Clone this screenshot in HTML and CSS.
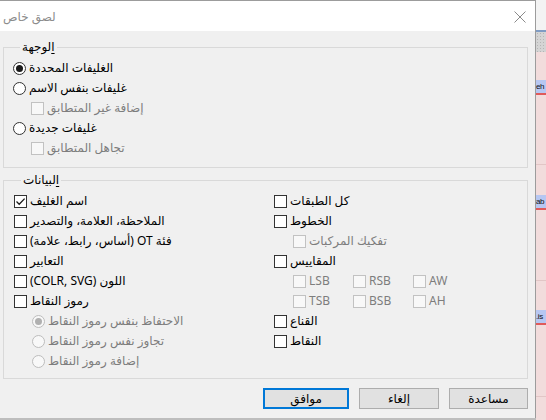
FILE: index.html
```html
<!DOCTYPE html>
<html lang="ar">
<head>
<meta charset="utf-8">
<link rel="stylesheet" href="styles.css">
</head>
<body>
<div class="screen">
  <div class="dialog">
    <div class="titlebar">
      <span class="title">لصق خاص</span>
      <svg class="close" width="12" height="12" viewBox="0 0 12 12"><path d="M0.5 0.5 L11.5 11.5 M11.5 0.5 L0.5 11.5" stroke="#8a8a8a" stroke-width="1" fill="none"/></svg>
    </div>
    <div class="content">
      <fieldset class="group g1">
        <legend><span dir="rtl"><span class="ul">ا</span>لوجهة</span></legend>
        <div class="row"><span class="radio on"></span><span class="lbl" dir="rtl">الغليفات المحددة</span></div>
        <div class="row"><span class="radio"></span><span class="lbl" dir="rtl">غليفات بنفس الاسم</span></div>
        <div class="row sub dis"><span class="check"></span><span class="lbl" dir="rtl">إضافة غير المتطابق</span></div>
        <div class="row"><span class="radio"></span><span class="lbl" dir="rtl">غليفات جديدة</span></div>
        <div class="row sub dis"><span class="check"></span><span class="lbl" dir="rtl">تجاهل المتطابق</span></div>
      </fieldset>
      <fieldset class="group g2">
        <legend><span dir="rtl"><span class="ul">ا</span>لبيانات</span></legend>
        <div class="cols">
          <div class="col">
            <div class="row"><span class="check on"><svg width="11" height="11" viewBox="0 0 11 11"><path d="M1.5 5.5 L4.2 8.2 L9.6 2.6" stroke="#1a1a1a" stroke-width="1.3" fill="none"/></svg></span><span class="lbl" dir="rtl">اسم الغليف</span></div>
            <div class="row"><span class="check"></span><span class="lbl" dir="rtl">الملاحظة، العلامة، والتصدير</span></div>
            <div class="row"><span class="check"></span><span class="lbl" dir="rtl">فئة OT (أساس، رابط، علامة)</span></div>
            <div class="row"><span class="check"></span><span class="lbl" dir="rtl">التعابير</span></div>
            <div class="row"><span class="check"></span><span class="lbl" dir="rtl">اللون (COLR, SVG)</span></div>
            <div class="row"><span class="check"></span><span class="lbl" dir="rtl">رموز النقاط</span></div>
            <div class="row sub dis"><span class="radio on"></span><span class="lbl" dir="rtl">الاحتفاظ بنفس رموز النقاط</span></div>
            <div class="row sub dis"><span class="radio"></span><span class="lbl" dir="rtl">تجاوز نفس رموز النقاط</span></div>
            <div class="row sub dis"><span class="radio"></span><span class="lbl" dir="rtl">إضافة رموز النقاط</span></div>
          </div>
          <div class="col right">
            <div class="row"><span class="check"></span><span class="lbl" dir="rtl">كل الطبقات</span></div>
            <div class="row"><span class="check"></span><span class="lbl" dir="rtl">الخطوط</span></div>
            <div class="row sub dis"><span class="check"></span><span class="lbl" dir="rtl">تفكيك المركبات</span></div>
            <div class="row"><span class="check"></span><span class="lbl" dir="rtl">المقاييس</span></div>
            <div class="row sub dis metrics">
              <span class="cell"><span class="check"></span><span class="lbl">LSB</span></span>
              <span class="cell"><span class="check"></span><span class="lbl">RSB</span></span>
              <span class="cell"><span class="check"></span><span class="lbl">AW</span></span>
            </div>
            <div class="row sub dis metrics">
              <span class="cell"><span class="check"></span><span class="lbl">TSB</span></span>
              <span class="cell"><span class="check"></span><span class="lbl">BSB</span></span>
              <span class="cell"><span class="check"></span><span class="lbl">AH</span></span>
            </div>
            <div class="row"><span class="check"></span><span class="lbl" dir="rtl">القناع</span></div>
            <div class="row"><span class="check"></span><span class="lbl" dir="rtl">النقاط</span></div>
          </div>
        </div>
      </fieldset>
      <div class="buttons">
        <button class="btn default">موافق</button>
        <button class="btn cancel">إلغاء</button>
        <button class="btn help">مساعدة</button>
      </div>
    </div>
  </div>
  <div class="strip">
    <div class="strip-top"></div>
    <div class="strip-line"></div>
    <div class="strip-dots"></div>
    <div class="strip-pink">
      <div class="zone z1"><span class="tag">eh</span></div>
      <div class="zone z2"><span class="tag">ab</span></div>
      <div class="zone z3"><span class="tag">.is</span></div>
    </div>
  </div>
</div>
</body>
</html>
```

FILE: styles.css
```css
html, body {
  margin: 0;
  padding: 0;
}
body {
  width: 546px;
  height: 420px;
  overflow: hidden;
  font-family: "Noto Sans", "DejaVu Sans", sans-serif;
  font-size: 12px;
  color: #000;
  background: #bdbdbd;
}
.screen {
  display: flex;
  height: 420px;
}
.dialog {
  width: 535px;
  height: 417px;
  flex: none;
  border-top: 1px solid #9c9c9c;
  border-right: 1px solid #9c9c9c;
  background: #f0f0f0;
  display: flex;
  flex-direction: column;
}
.titlebar {
  height: 30px;
  flex: none;
  background: #fff;
  display: flex;
  align-items: center;
  justify-content: space-between;
  padding: 0 9px 0 3px;
}
.title {
  color: #8c8c8c;
  font-size: 12px;
}
.close {
  display: block;
  margin-top: 1px;
}
.content {
  padding: 0 7px 0 3px;
  display: flex;
  flex-direction: column;
}
.group {
  margin: 0;
  border: 1px solid #d9d9d9;
  padding: 4px 0 0 9px;
  min-width: 0;
}
.group legend {
  margin-left: 7px;
  padding: 0 2px;
  line-height: 14px;
  height: 14px;
}
.ul {
  text-decoration: underline;
  text-underline-offset: 2px;
}
.g1 {
  margin-top: 9px;
  padding-bottom: 9px;
}
.g2 {
  margin-top: 5px;
  padding-left: 10px;
  padding-bottom: 7px;
}
.row {
  height: 20px;
  display: flex;
  align-items: center;
  white-space: nowrap;
}
.row.sub {
  padding-left: 18px;
}
.col.right .row.sub {
  padding-left: 19px;
}
.lbl {
  margin-left: 3px;
  line-height: 14px;
}
.dis .lbl {
  color: #7d7d7d;
}
.check {
  width: 11px;
  height: 11px;
  border: 1px solid #333;
  background: #fff;
  flex: none;
  display: flex;
  align-items: center;
  justify-content: center;
}
.dis .check {
  border-color: #c2c2c2;
  background: #f8f8f8;
}
.radio {
  width: 11px;
  height: 11px;
  border: 1px solid #333;
  border-radius: 50%;
  background: #fff;
  flex: none;
  display: flex;
  align-items: center;
  justify-content: center;
}
.radio.on::after {
  content: "";
  width: 7px;
  height: 7px;
  border-radius: 50%;
  background: #1a1a1a;
}
.dis .radio {
  border-color: #bdbdbd;
  background: #f8f8f8;
}
.dis .radio.on::after {
  background: #b0b0b0;
}
.cols {
  display: grid;
  grid-template-columns: 260px 1fr;
}
.metrics .cell {
  width: 60px;
  display: flex;
  align-items: center;
}
.buttons {
  margin-top: 9px;
  display: flex;
  justify-content: flex-end;
  gap: 10px;
}
.btn {
  height: 21px;
  width: 80px;
  padding: 0;
  margin: 0;
  border: 1px solid #adadad;
  background: #e1e1e1;
  font-family: "Noto Sans", "DejaVu Sans", sans-serif;
  font-size: 12px;
  line-height: 17px;
  color: #000;
}
.btn.default {
  width: 86px;
  border: 2px solid #0078d7;
}
.btn.help {
  width: 79px;
}
.strip {
  width: 10px;
  flex: none;
  display: flex;
  flex-direction: column;
  overflow: hidden;
}
.strip-top {
  height: 30px;
  background: #f3f3f3;
}
.strip-line {
  height: 2px;
  background: #7f9cc4;
}
.strip-dots {
  height: 20px;
  background-color: #d4d4d4;
  background-image: radial-gradient(circle, #b5b5b5 0.6px, transparent 0.8px);
  background-size: 3px 3px;
}
.strip-pink {
  flex: 1;
  background: #f2dcdc;
  display: flex;
  flex-direction: column;
}
.zone {
  height: 115px;
  border-bottom: 1px solid #e2c6c6;
  position: relative;
}
.z1 { height: 112px; }
.tag {
  position: absolute;
  left: 0;
  width: 10px;
  box-sizing: border-box;
  font-family: "Liberation Sans Narrow", "Liberation Sans", sans-serif;
  font-size: 8px;
  letter-spacing: -0.4px;
  line-height: 13px;
  background: #b7c7f2;
  border-bottom: 2px solid #e05a5a;
  color: #111;
  padding: 0;
  white-space: nowrap;
  overflow: hidden;
}
.z1 .tag { top: 28px; }
.z2 .tag { top: 30px; }
.z3 .tag { top: 29px; }
```
